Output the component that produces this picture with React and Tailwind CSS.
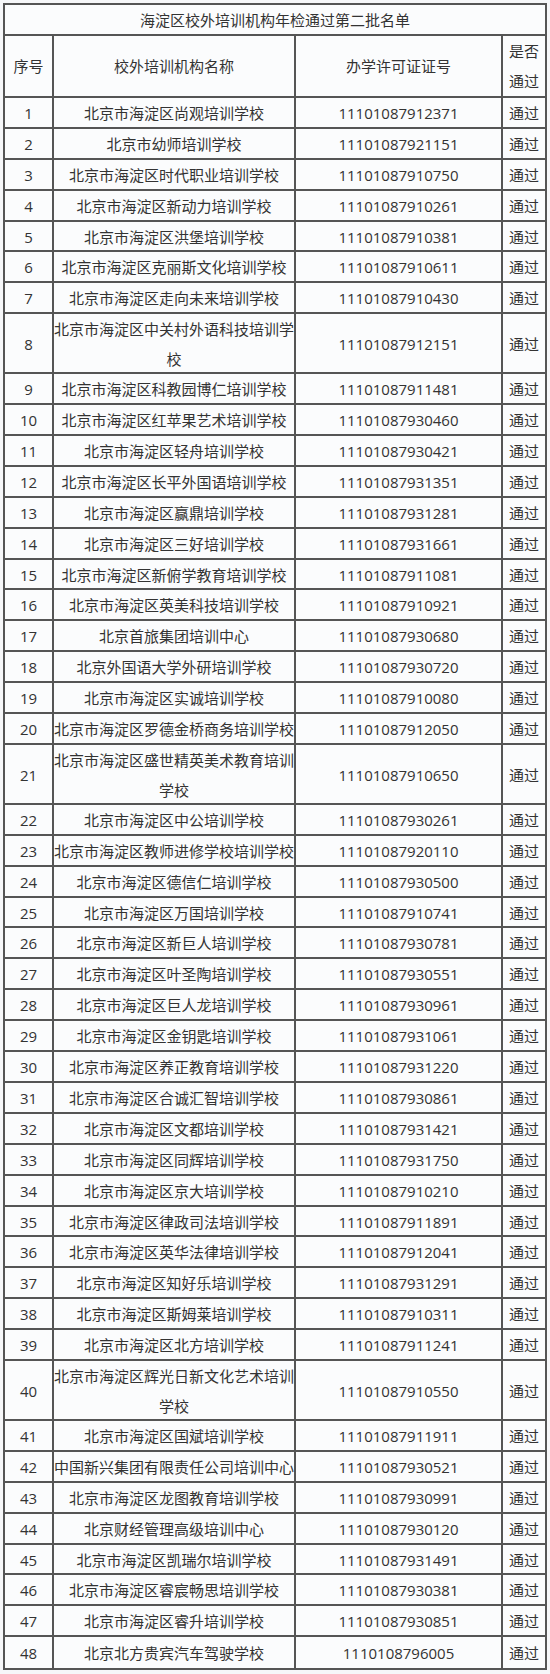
import React from "react";

const ROWS = [
  ["1", "北京市海淀区尚观培训学校", "11101087912371"],
  ["2", "北京市幼师培训学校", "11101087921151"],
  ["3", "北京市海淀区时代职业培训学校", "11101087910750"],
  ["4", "北京市海淀区新动力培训学校", "11101087910261"],
  ["5", "北京市海淀区洪堡培训学校", "11101087910381"],
  ["6", "北京市海淀区克丽斯文化培训学校", "11101087910611"],
  ["7", "北京市海淀区走向未来培训学校", "11101087910430"],
  ["8", ["北京市海淀区中关村外语科技培训学", "校"], "11101087912151"],
  ["9", "北京市海淀区科教园博仁培训学校", "11101087911481"],
  ["10", "北京市海淀区红苹果艺术培训学校", "11101087930460"],
  ["11", "北京市海淀区轻舟培训学校", "11101087930421"],
  ["12", "北京市海淀区长平外国语培训学校", "11101087931351"],
  ["13", "北京市海淀区赢鼎培训学校", "11101087931281"],
  ["14", "北京市海淀区三好培训学校", "11101087931661"],
  ["15", "北京市海淀区新俯学教育培训学校", "11101087911081"],
  ["16", "北京市海淀区英美科技培训学校", "11101087910921"],
  ["17", "北京首旅集团培训中心", "11101087930680"],
  ["18", "北京外国语大学外研培训学校", "11101087930720"],
  ["19", "北京市海淀区实诚培训学校", "11101087910080"],
  ["20", "北京市海淀区罗德金桥商务培训学校", "11101087912050"],
  ["21", ["北京市海淀区盛世精英美术教育培训", "学校"], "11101087910650"],
  ["22", "北京市海淀区中公培训学校", "11101087930261"],
  ["23", "北京市海淀区教师进修学校培训学校", "11101087920110"],
  ["24", "北京市海淀区德信仁培训学校", "11101087930500"],
  ["25", "北京市海淀区万国培训学校", "11101087910741"],
  ["26", "北京市海淀区新巨人培训学校", "11101087930781"],
  ["27", "北京市海淀区叶圣陶培训学校", "11101087930551"],
  ["28", "北京市海淀区巨人龙培训学校", "11101087930961"],
  ["29", "北京市海淀区金钥匙培训学校", "11101087931061"],
  ["30", "北京市海淀区养正教育培训学校", "11101087931220"],
  ["31", "北京市海淀区合诚汇智培训学校", "11101087930861"],
  ["32", "北京市海淀区文都培训学校", "11101087931421"],
  ["33", "北京市海淀区同辉培训学校", "11101087931750"],
  ["34", "北京市海淀区京大培训学校", "11101087910210"],
  ["35", "北京市海淀区律政司法培训学校", "11101087911891"],
  ["36", "北京市海淀区英华法律培训学校", "11101087912041"],
  ["37", "北京市海淀区知好乐培训学校", "11101087931291"],
  ["38", "北京市海淀区斯姆莱培训学校", "11101087910311"],
  ["39", "北京市海淀区北方培训学校", "11101087911241"],
  ["40", ["北京市海淀区辉光日新文化艺术培训", "学校"], "11101087910550"],
  ["41", "北京市海淀区国斌培训学校", "11101087911911"],
  ["42", "中国新兴集团有限责任公司培训中心", "11101087930521"],
  ["43", "北京市海淀区龙图教育培训学校", "11101087930991"],
  ["44", "北京财经管理高级培训中心", "11101087930120"],
  ["45", "北京市海淀区凯瑞尔培训学校", "11101087931491"],
  ["46", "北京市海淀区睿宸畅思培训学校", "11101087930381"],
  ["47", "北京市海淀区睿升培训学校", "11101087930851"],
  ["48", "北京北方贵宾汽车驾驶学校", "1110108796005"],
];

const cell = "flex flex-col items-center justify-center text-center whitespace-nowrap leading-[30px]";

function Row({ no, name, license, last }) {
  const tall = Array.isArray(name);
  return (
    <div
      className={`grid grid-cols-[49px_242px_207px_42px] ${tall ? "h-[60px]" : "h-[30.9px]"} ${last ? "" : "border-b-2 border-[#555]"}`}
    >
      <div className={`${cell} border-r-2 border-[#555]`}>{no}</div>
      <div className={`${cell} border-r-2 border-[#555]`}>
        {tall ? name.map((l) => <span key={l}>{l}</span>) : name}
      </div>
      <div className={`${cell} border-r-2 border-[#555]`}>{license}</div>
      <div className={cell}>通过</div>
    </div>
  );
}

export default function App() {
  return (
    <div
      className="min-h-[1674px] w-[550px] bg-[#f6f7f9] pt-[3px] pl-[3px] text-[15px] text-[#333]"
      style={{ fontFamily: '"Open Sans", "Noto Sans CJK SC", sans-serif' }}
    >
      <div className="w-[544px] border-2 border-[#555] bg-[#fbfcfd]">
        <div className="flex h-[31px] items-center justify-center border-b-2 border-[#555] leading-[30px]">
          海淀区校外培训机构年检通过第二批名单
        </div>
        <div className="grid h-[62px] grid-cols-[49px_242px_207px_42px] border-b-2 border-[#555]">
          <div className={`${cell} border-r-2 border-[#555]`}>序号</div>
          <div className={`${cell} border-r-2 border-[#555]`}>校外培训机构名称</div>
          <div className={`${cell} border-r-2 border-[#555]`}>办学许可证证号</div>
          <div className={cell}>
            <span>是否</span>
            <span>通过</span>
          </div>
        </div>
        {ROWS.map(([no, name, license], i) => (
          <Row key={no} no={no} name={name} license={license} last={i === ROWS.length - 1} />
        ))}
      </div>
    </div>
  );
}
